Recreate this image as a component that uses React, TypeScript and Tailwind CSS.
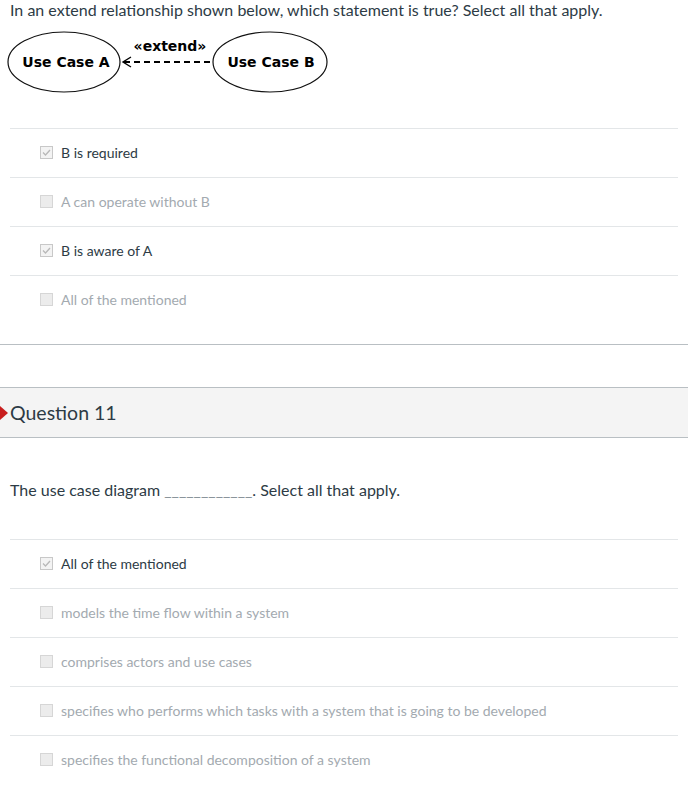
import React from "react";

const Box = ({ checked }: { checked: boolean }) =>
  checked ? (
    <span className="w-[13px] h-[13px] border border-[#c8c8c8] bg-[#f3f3f3] flex items-center justify-center shrink-0">
      <svg width="11" height="11" viewBox="0 0 11 11">
        <path d="M2 5.5 L4.5 8 L9 3" fill="none" stroke="#b8b8b8" strokeWidth="1.3" />
      </svg>
    </span>
  ) : (
    <span className="w-[13px] h-[13px] border border-[#d6d6d6] bg-[#ececec] shrink-0" />
  );

const Option = ({ label, checked }: { label: string; checked: boolean }) => (
  <div className="h-[49px] border-t border-[#e3e6e8] flex items-center pl-[30px] gap-[8px] pb-[2px]">
    <Box checked={checked} />
    <span className={`text-[14px] ${checked ? "text-[#2d3b45]" : "text-[#a3aab0]"}`}>{label}</span>
  </div>
);

export default function App() {
  return (
    <div className="w-[688px] h-[793px] bg-white overflow-hidden" style={{ fontFamily: "Lato, 'Liberation Sans', sans-serif" }}>
      <div className="px-[10px]">
        <div className="text-[16px] leading-[20px] text-[#2d3b45]">
          In an extend relationship shown below, which statement is true? Select all that apply.
        </div>
        <svg width="340" height="70" viewBox="0 28 340 70" className="block mt-[8px] -ml-[10px]">
          <ellipse cx="64" cy="62" rx="56" ry="30" fill="white" stroke="#111" strokeWidth="1.2" />
          <ellipse cx="270" cy="62" rx="57" ry="30" fill="white" stroke="#111" strokeWidth="1.2" />
          <text x="66" y="67" textAnchor="middle" fontFamily="'DejaVu Sans', sans-serif" fontWeight="bold" fontSize="14" fill="#000">Use Case A</text>
          <text x="271" y="67" textAnchor="middle" fontFamily="'DejaVu Sans', sans-serif" fontWeight="bold" fontSize="14" fill="#000">Use Case B</text>
          <text x="170" y="51" textAnchor="middle" fontFamily="'DejaVu Sans', sans-serif" fontWeight="bold" fontSize="14" fill="#000">«extend»</text>
          <line x1="124" y1="62" x2="214" y2="62" stroke="#000" strokeWidth="2" strokeDasharray="6 4" />
          <path d="M131 57 L123 62 L131 67" fill="none" stroke="#000" strokeWidth="1.4" />
        </svg>
        <div className="mt-[30px]">
          <Option label="B is required" checked />
          <Option label="A can operate without B" checked={false} />
          <Option label="B is aware of A" checked />
          <Option label="All of the mentioned" checked={false} />
        </div>
      </div>
      <div className="mt-[20px] border-t border-[#b9bfc3] h-[43px]" />
      <div className="relative h-[51px] bg-[#f4f4f4] border-t border-b border-[#b9bfc3] flex items-center pl-[10px]">
        <svg width="8" height="16" viewBox="0 0 8 16" className="absolute left-0 top-[17px]">
          <polygon points="0,1 8,8 0,15" fill="#c81e1e" />
        </svg>
        <span className="text-[19.5px] font-normal text-[#2d3b45]">Question 11</span>
      </div>
      <div className="px-[10px]">
        <div className="pt-[42px] h-[101px] text-[16px] leading-[20px] text-[#2d3b45]">
          The use case diagram <span className="text-[#8a949b]">____________</span>. Select all that apply.
        </div>
        <Option label="All of the mentioned" checked />
        <Option label="models the time flow within a system" checked={false} />
        <Option label="comprises actors and use cases" checked={false} />
        <Option label="specifies who performs which tasks with a system that is going to be developed" checked={false} />
        <Option label="specifies the functional decomposition of a system" checked={false} />
      </div>
    </div>
  );
}
